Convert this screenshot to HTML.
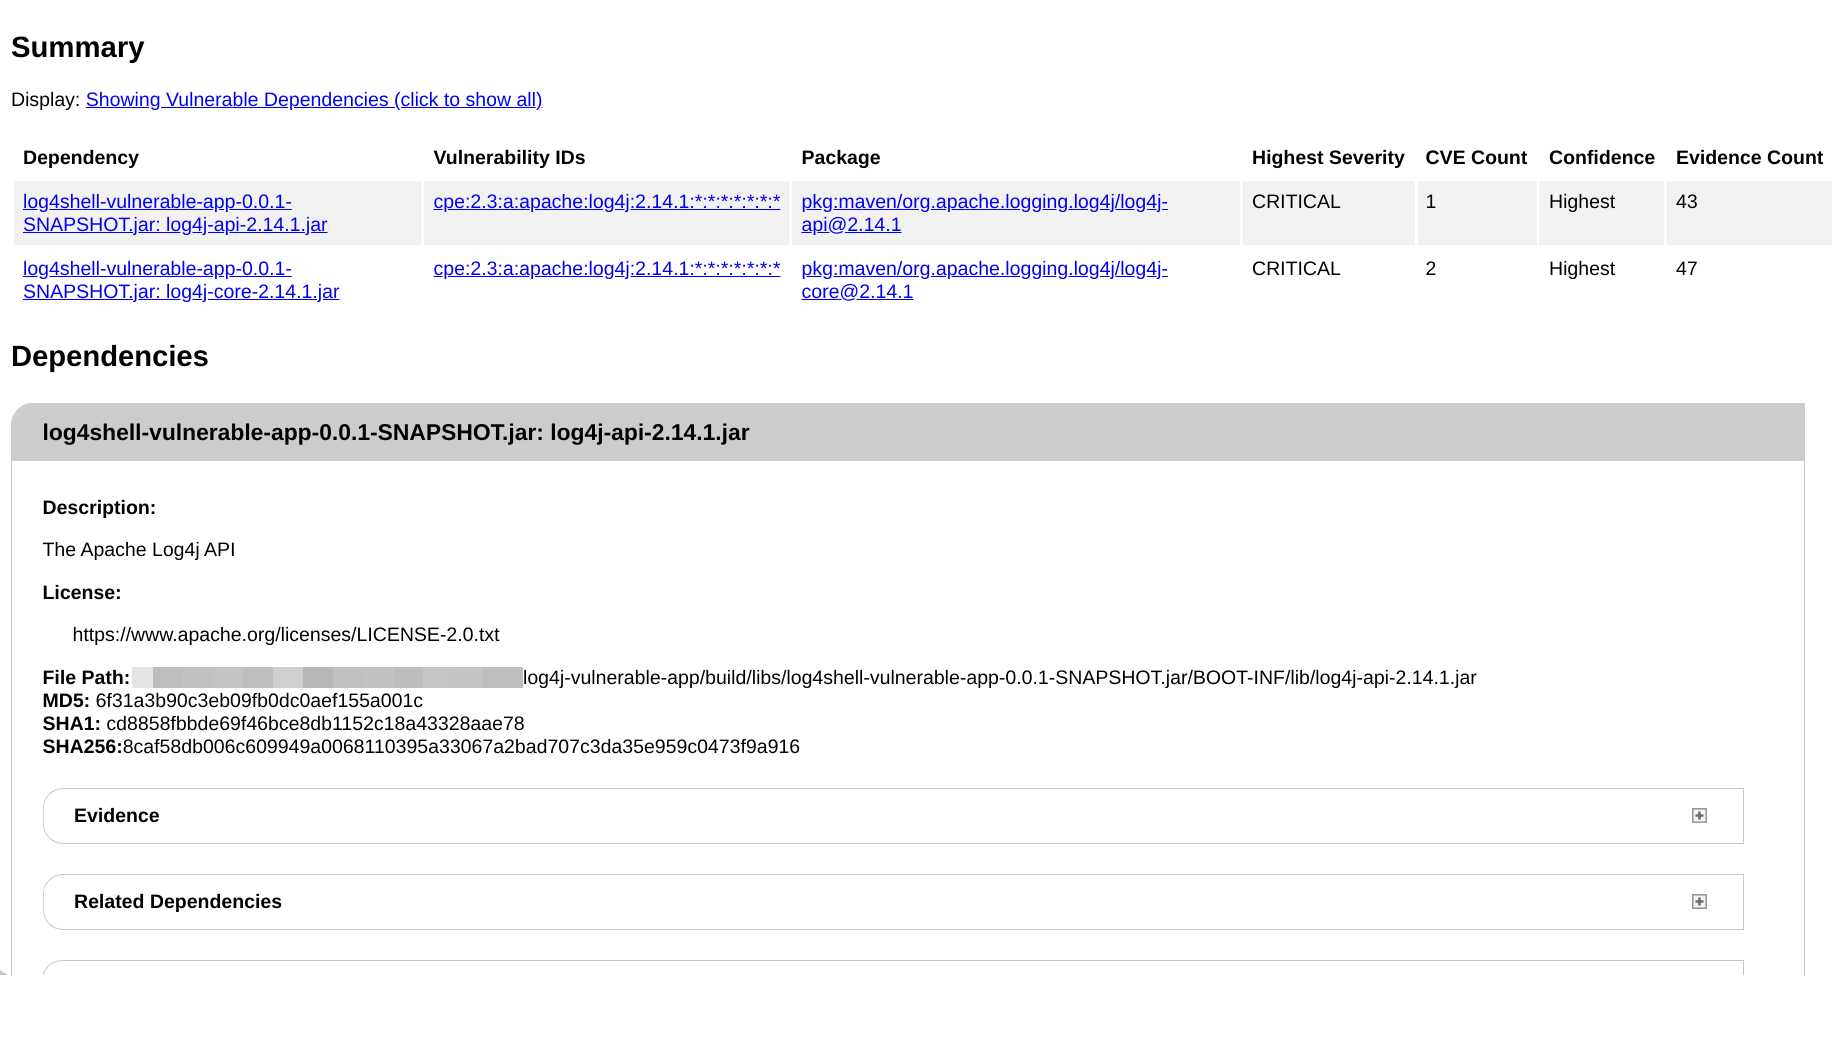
<!DOCTYPE html>
<html><head><meta charset="utf-8"><title>Dependency-Check Report</title>
<style>
html,body{margin:0;padding:0;background:#fff;width:1847px;height:1049px;overflow:hidden}
body{font-family:"Liberation Sans",Arial,sans-serif;font-size:19.5px;color:#000;position:relative;text-rendering:geometricPrecision}
.t{position:absolute;line-height:23px;white-space:nowrap}
.b{font-weight:bold}
a{color:#0000ee;text-decoration:underline}
.c{position:absolute;background:#f2f2f2;top:181px;height:64px}
.box{position:absolute;left:43px;width:1699px;height:54px;border:1px solid #c8c8c8;border-left-color:#d0d0d0;border-radius:20px 0 0 20px;background:#fff;box-sizing:content-box}
.ic{position:absolute;left:1692px;width:15px;height:15px}
.r{position:absolute;top:667px;height:21px}
</style></head><body>
<div class="t b" style="left:11px;top:31px;font-size:29.3px;line-height:33px">Summary</div>
<div class="t" style="left:11px;top:89px">Display: <a href="#">Showing Vulnerable Dependencies (click to show all)</a></div>

<div class="t b" style="left:23px;top:146.5px">Dependency</div>
<div class="t b" style="left:433.5px;top:146.5px">Vulnerability IDs</div>
<div class="t b" style="left:801.5px;top:146.5px">Package</div>
<div class="t b" style="left:1252px;top:146.5px">Highest Severity</div>
<div class="t b" style="left:1425.5px;top:146.5px">CVE Count</div>
<div class="t b" style="left:1549px;top:146.5px">Confidence</div>
<div class="t b" style="left:1676px;top:146.5px">Evidence Count</div>

<div class="c" style="left:14px;width:407px"></div>
<div class="c" style="left:424px;width:365px"></div>
<div class="c" style="left:792px;width:448px"></div>
<div class="c" style="left:1243px;width:172px"></div>
<div class="c" style="left:1417.5px;width:119px"></div>
<div class="c" style="left:1539px;width:125px"></div>
<div class="c" style="left:1667px;width:165px"></div>

<div class="t" style="left:23px;top:190.5px"><a href="#">log4shell-vulnerable-app-0.0.1-<br>SNAPSHOT.jar: log4j-api-2.14.1.jar</a></div>
<div class="t" style="left:433.5px;top:190.5px"><a href="#">cpe:2.3:a:apache:log4j:2.14.1:*:*:*:*:*:*:*</a></div>
<div class="t" style="left:801.5px;top:190.5px"><a href="#">pkg:maven/org.apache.logging.log4j/log4j-<br>api@2.14.1</a></div>
<div class="t" style="left:1252px;top:190.5px">CRITICAL</div>
<div class="t" style="left:1425.5px;top:190.5px">1</div>
<div class="t" style="left:1549px;top:190.5px">Highest</div>
<div class="t" style="left:1676px;top:190.5px">43</div>

<div class="t" style="left:23px;top:257.5px"><a href="#">log4shell-vulnerable-app-0.0.1-<br>SNAPSHOT.jar: log4j-core-2.14.1.jar</a></div>
<div class="t" style="left:433.5px;top:257.5px"><a href="#">cpe:2.3:a:apache:log4j:2.14.1:*:*:*:*:*:*:*</a></div>
<div class="t" style="left:801.5px;top:257.5px"><a href="#">pkg:maven/org.apache.logging.log4j/log4j-<br>core@2.14.1</a></div>
<div class="t" style="left:1252px;top:257.5px">CRITICAL</div>
<div class="t" style="left:1425.5px;top:257.5px">2</div>
<div class="t" style="left:1549px;top:257.5px">Highest</div>
<div class="t" style="left:1676px;top:257.5px">47</div>

<div class="t b" style="left:11px;top:341px;font-size:29.2px;line-height:33px">Dependencies</div>

<div style="position:absolute;left:11px;top:403px;width:1792px;height:572px;border:1px solid #c4c4c4;border-bottom:none;border-radius:22px 0 0 0;background:#fff"></div>
<div style="position:absolute;left:11px;top:403px;width:1794px;height:58px;background:#ccc;border-radius:22px 0 0 0"></div>
<div class="box" style="top:788px"></div>
<div class="box" style="top:874px"></div>
<svg style="position:absolute;left:43px;top:960px" width="1702" height="15"><path d="M.5 15V14C3 6 10 .5 20 .5H1700.5V15" fill="#fff" stroke="#c8c8c8"/></svg>
<svg style="position:absolute;left:0;top:968px" width="10" height="7"><path d="M0 2L8 7H0Z" fill="#c6c6c6"/></svg>

<div class="t b" style="left:42.5px;top:420px;font-size:22.85px;line-height:25px">log4shell-vulnerable-app-0.0.1-SNAPSHOT.jar: log4j-api-2.14.1.jar</div>
<div class="t b" style="left:42.5px;top:496.5px">Description:</div>
<div class="t" style="left:42.5px;top:538.5px">The Apache Log4j API</div>
<div class="t b" style="left:42.5px;top:581.5px">License:</div>
<div class="t" style="left:72.5px;top:624px">https://www.apache.org/licenses/LICENSE-2.0.txt</div>

<div class="r" style="left:132px;width:21px;background:#e3e3e3"></div>
<div class="r" style="left:153px;width:30px;background:#bdbdbd"></div>
<div class="r" style="left:183px;width:30px;background:#c2c2c2"></div>
<div class="r" style="left:213px;width:30px;background:#c4c4c4"></div>
<div class="r" style="left:243px;width:30px;background:#bebebe"></div>
<div class="r" style="left:273px;width:30px;background:#cfcfcf"></div>
<div class="r" style="left:303px;width:30px;background:#b7b7b7"></div>
<div class="r" style="left:333px;width:30px;background:#c0c0c0"></div>
<div class="r" style="left:363px;width:31px;background:#c2c2c2"></div>
<div class="r" style="left:394px;width:29px;background:#bcbcbc"></div>
<div class="r" style="left:423px;width:30px;background:#c5c5c5"></div>
<div class="r" style="left:453px;width:30px;background:#c4c4c4"></div>
<div class="r" style="left:483px;width:40px;background:#bdbdbd"></div>

<div class="t b" style="left:42.5px;top:666.5px">File Path:</div>
<div class="t" style="left:523px;top:666.5px">log4j-vulnerable-app/build/libs/log4shell-vulnerable-app-0.0.1-SNAPSHOT.jar/BOOT-INF/lib/log4j-api-2.14.1.jar</div>
<div class="t" style="left:42.5px;top:689.5px"><b>MD5:</b> 6f31a3b90c3eb09fb0dc0aef155a001c</div>
<div class="t" style="left:42.5px;top:712.5px"><b>SHA1:</b> cd8858fbbde69f46bce8db1152c18a43328aae78</div>
<div class="t" style="left:42.5px;top:735.5px"><b>SHA256:</b>8caf58db006c609949a0068110395a33067a2bad707c3da35e959c0473f9a916</div>

<div class="t b" style="left:74px;top:805px">Evidence</div>
<div class="t b" style="left:74px;top:891px">Related Dependencies</div>

<svg class="ic" style="top:808px" viewBox="0 0 15 15"><rect x=".8" y=".8" width="13.4" height="13.4" fill="#f4f4f4" stroke="#999" stroke-width="1.6"/><path d="M7.5 3.5v8M3.5 7.5h8" stroke="#6e6e6e" stroke-width="2.6"/></svg>
<svg class="ic" style="top:894px" viewBox="0 0 15 15"><rect x=".8" y=".8" width="13.4" height="13.4" fill="#f4f4f4" stroke="#999" stroke-width="1.6"/><path d="M7.5 3.5v8M3.5 7.5h8" stroke="#6e6e6e" stroke-width="2.6"/></svg>
</body></html>
